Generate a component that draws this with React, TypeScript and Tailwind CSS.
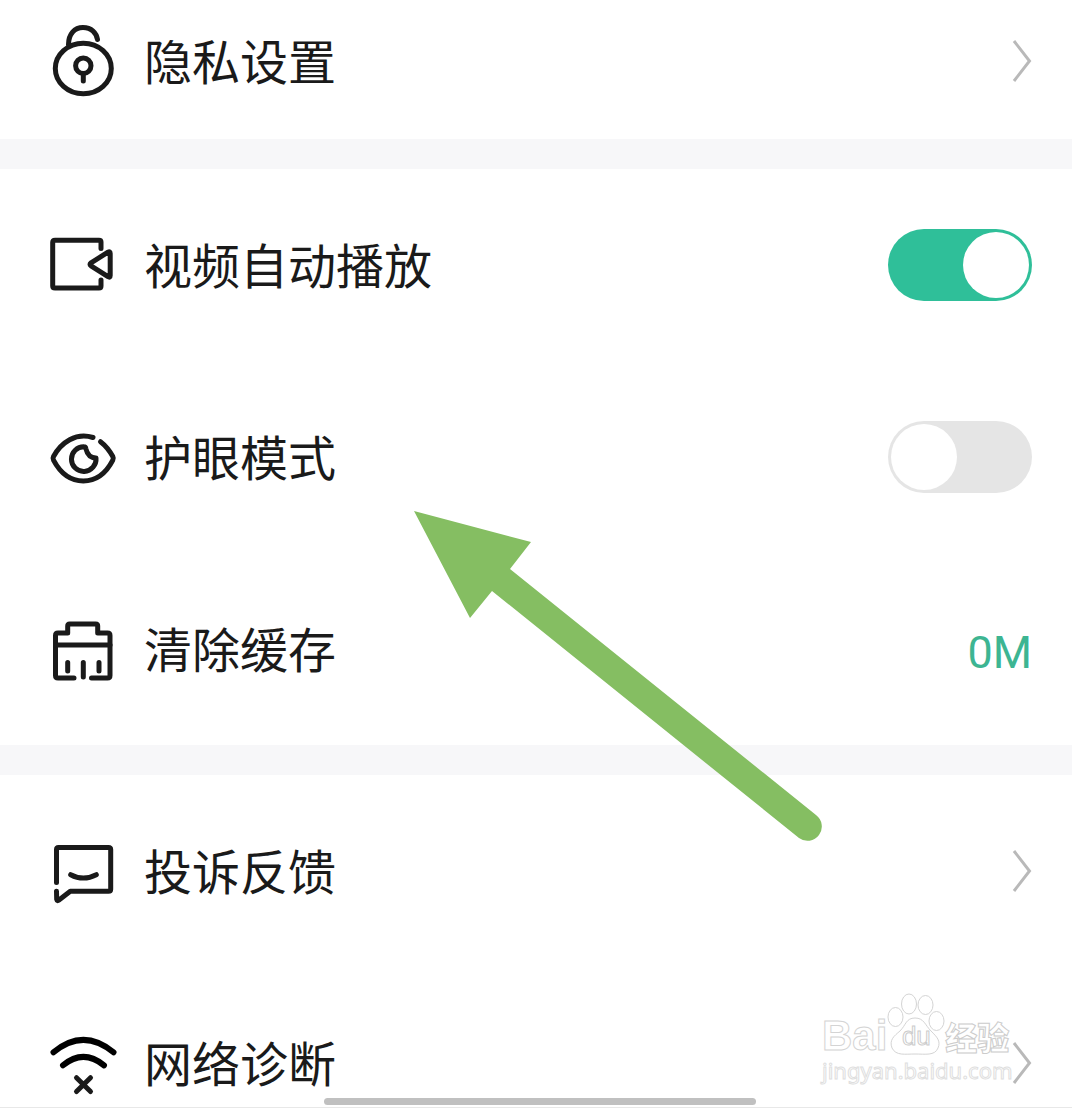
import { useState } from 'react';
import type { ReactNode } from 'react';
import { clsx } from 'clsx';

const Icon = ({ children }: { children: ReactNode }) => (
  <svg
    viewBox="0 0 70 80"
    className="h-20 w-[70px] shrink-0"
    fill="none"
    stroke="currentColor"
    strokeWidth="5"
    strokeLinecap="round"
    strokeLinejoin="round"
    aria-hidden="true">
    {children}
  </svg>
);

const LockIcon = () => (
  <Icon>
    <ellipse cx="35.3" cy="47.5" rx="28" ry="25.3" />
    <path d="M20.5 23.5C20.5 13 26.5 6.5 35 6.5S48.500 12 49.5 18.5" />
    <circle cx="35.3" cy="44.700" r="7.7" />
    <path d="M35.3 52.5V60" />
  </Icon>
);

const VideoIcon = () => (
  <Icon>
    <path d="M53 23.5V17Q53 15.2 51 15.2H7Q4.7 15.2 4.7 17.500V61Q4.7 63 7 63H51Q53 63 53 61V55" />
    <path d="M43 37.800L60 27.200Q62.2 26 62.2 28.500V50.500Q62.200 53 60 51.700L43 40.800Q41 39.300 43 37.800Z" />
  </Icon>
);

const EyeIcon = () => (
  <Icon>
    <path d="M45 20.5C28 15 13 25.500 5.500 39.500Q4.500 41.300 5.500 43.200C12 55.5 22 64 35.300 64S58.500 55.500 64.800 43.200Q65.800 41.300 64.800 39.500C61.500 33.500 57.500 28.500 52.500 24.7" />
    <path d="M36.200 29.8A12.300 12.300 0 1 0 48 41C41.500 41 39 36.500 37.800 31.500Q37.500 29.800 36.200 29.800Z" />
  </Icon>
);

const CacheIcon = () => (
  <Icon>
    <path d="M26 69H10Q7.5 69 7.500 66.500V26.500Q7.5 24 10 24H19.7V17Q19.7 15 21.700 15H47.700Q49.7 15 49.7 17V24H59.500Q62 24 62 26.500V66.500Q62 69 59.500 69H43.5" />
    <path d="M7.5 36H62M19.7 53.5V62M35.3 53.5V68M51 53.5V62" />
  </Icon>
);

const FeedbackIcon = () => (
  <Icon>
    <path d="M8.5 51.5V18.500Q8.5 16.5 10.500 16.5H60.500Q62.7 16.5 62.7 18.500V58.300Q62.7 60.3 60.500 60.3H22.3L11 69Q9 70.500 8.700 68.500L8.5 60.300" />
    <path d="M22.7 43.7Q35.3 50.5 48.3 43.7" />
  </Icon>
);

const NetworkIcon = () => (
  <Icon>
    <path
      className="stroke-black"
      strokeWidth="6"
      d="M5.5 29.3Q35.3 4.5 65.5 29.3M15 42.3Q35.3 25.5 56 42.3"
    />
    <path d="M28.5 54.7L42.5 68.5M42.5 54.7L28.5 68.5" />
  </Icon>
);

const Chevron = () => (
  <svg
    viewBox="0 0 20 44"
    className="h-11 w-5 shrink-0"
    fill="none"
    stroke="#b9b9b9"
    strokeWidth="3"
    aria-hidden="true">
    <path d="M2 2L17.5 22L2 42" />
  </svg>
);

const RowLabel = ({ children }: { children: ReactNode }) => (
  <span className="ml-[26px] grow pb-1">{children}</span>
);

const LinkRow = ({
  icon,
  label,
  className,
}: {
  icon: ReactNode;
  label: string;
  className?: string;
}) => (
  <a
    href="#"
    className={clsx('flex items-center pr-10 pl-12', className || 'h-48')}>
    {icon}
    <RowLabel>{label}</RowLabel>
    <Chevron />
  </a>
);

const SwitchRow = ({
  icon,
  label,
  defaultOn = false,
}: {
  icon: ReactNode;
  label: string;
  defaultOn?: boolean;
}) => {
  const [on, setOn] = useState(defaultOn);

  return (
    <label className="flex h-48 cursor-pointer items-center pr-10 pl-12">
      {icon}
      <RowLabel>{label}</RowLabel>
      <input
        type="checkbox"
        role="switch"
        checked={on}
        onChange={(e) => setOn(e.target.checked)}
        className="flex h-[72px] w-36 shrink-0 cursor-pointer appearance-none rounded-full bg-[#e5e5e5] p-[3px] before:size-[66px] before:rounded-full before:bg-white checked:justify-end checked:bg-[#2fbf99]"
      />
    </label>
  );
};

const Divider = () => <div className="h-[30px] bg-[#f7f7f9]" />;

const Arrow = () => (
  <svg
    viewBox="0 0 410 332"
    className="pointer-events-none absolute top-[510px] left-[413px] h-[332px] w-[410px]"
    fill="#85be62"
    aria-hidden="true">
    <path d="M1 1L118 32L97 59L403 305A14 14 0 0 1 386 328L79 81L57 108Z" />
  </svg>
);

const Watermark = () => (
  <div className="pointer-events-none absolute top-[992px] left-[822px] text-white">
    <div className="flex h-16 items-end font-['Liberation_Sans',sans-serif] leading-10 font-bold">
      <span className="text-[42px] [-webkit-text-stroke:1px_#d4d4d4]">Bai</span>
      <span className="relative flex h-16 w-[58px] items-end justify-center">
        <svg
          viewBox="0 0 58 64"
          className="absolute inset-0 h-16 w-[58px]"
          fill="white"
          stroke="#d4d4d4"
          aria-hidden="true">
          <ellipse cx="8.5" cy="25" rx="7.5" ry="9.5" />
          <ellipse cx="22" cy="12" rx="7.5" ry="10" />
          <ellipse cx="38.5" cy="13" rx="7.5" ry="9.5" />
          <ellipse cx="49.5" cy="29" rx="7.5" ry="9.5" />
          <path d="M28 26C37 26 38 33 44 39C50 45 54 49 51 56C48 64 38 62 28 62S9 64 5 56C2 48 7 44 13 39C19 33 19 26 28 26Z" />
        </svg>
        <span className="relative text-[26px] font-normal [-webkit-text-stroke:1px_#cccccc]">
          du
        </span>
      </span>
      <span className="font-['Noto_Sans_CJK_SC',sans-serif] text-[32px] font-black [-webkit-text-stroke:1px_#cccccc]">
        经验
      </span>
    </div>
    <div className="font-['Noto_Sans',sans-serif] text-[22px] leading-7 [-webkit-text-stroke:1px_#dedede]">
      jingyan.baidu.com
    </div>
  </div>
);

export default function App() {
  return (
    <div className="relative h-screen overflow-hidden border-b border-[#e8e8e8] bg-white font-['Noto_Sans_CJK_SC',sans-serif] text-5xl text-[#1a1a1a]">
      <main>
        <section className="pb-[17px]">
          <LinkRow
            icon={<LockIcon />}
            label="隐私设置"
            className="h-[122px]"
          />
        </section>
        <Divider />
        <section>
          <SwitchRow icon={<VideoIcon />} label="视频自动播放" defaultOn />
          <SwitchRow icon={<EyeIcon />} label="护眼模式" />
          <button
            type="button"
            className="flex h-48 w-full items-center pr-10 pl-12 text-left">
            <CacheIcon />
            <RowLabel>清除缓存</RowLabel>
            <span className="pt-1.5 font-[Roboto,sans-serif] text-[45px] text-[#3db592]">
              0M
            </span>
          </button>
        </section>
        <Divider />
        <section>
          <LinkRow icon={<FeedbackIcon />} label="投诉反馈" />
          <LinkRow icon={<NetworkIcon />} label="网络诊断" />
        </section>
      </main>
      <Arrow />
      <Watermark />
      <div className="absolute right-0 bottom-0.5 left-2 mx-auto h-[7px] w-[432px] rounded-full bg-[#c0c0c0]" />
    </div>
  );
}
